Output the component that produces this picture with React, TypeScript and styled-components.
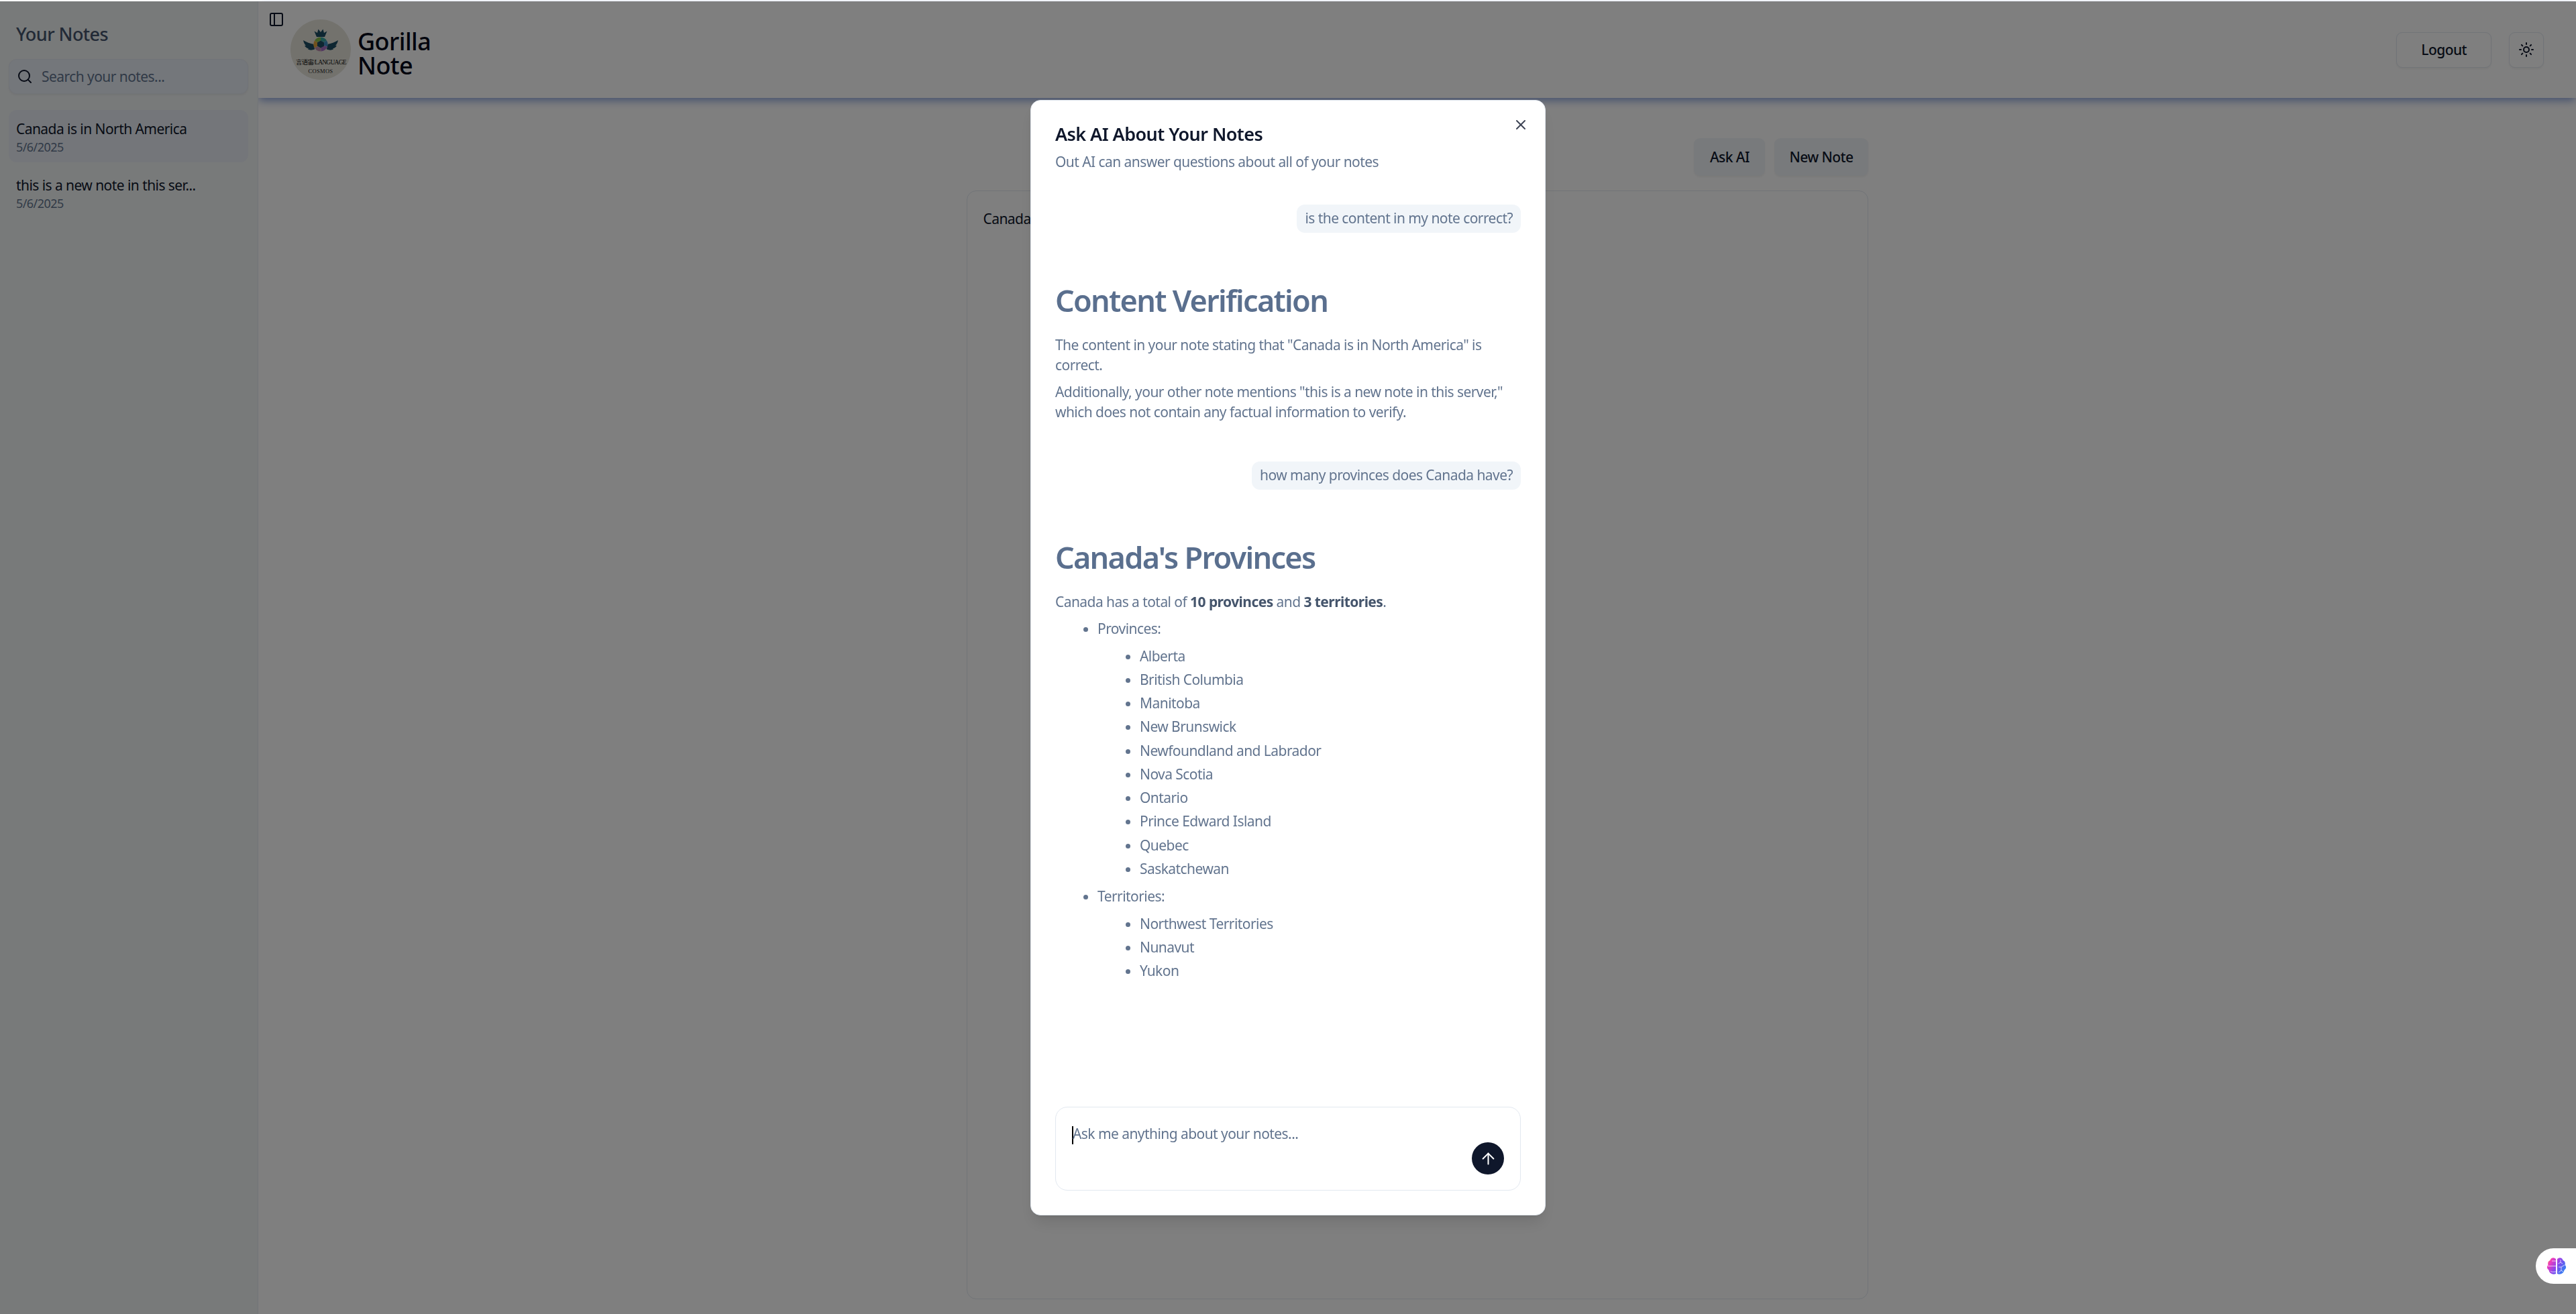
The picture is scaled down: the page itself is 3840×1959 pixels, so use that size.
import styled, { createGlobalStyle } from 'styled-components';
import { ArrowUp, PanelLeft, Search, Sun, X } from 'lucide-react';

const GlobalStyle = createGlobalStyle`
  html, body {
    margin: 0;
    padding: 0;
    height: 100%;
    background: #fff;
    font-family: 'Noto Sans', 'Open Sans', 'Liberation Sans', sans-serif;
    letter-spacing: -0.035em;
    color: #0f172b;
  }
  * { box-sizing: border-box; }
`;

const Page = styled.div`
  display: flex;
  height: 1959px;
  padding-top: 2px;
  overflow: hidden;
`;

const Sidebar = styled.aside`
  position: relative;
  z-index: 2;
  width: 385px;
  flex: none;
  padding: 30px 14px 0 13px;
  background: #f1f4f5;
  border-right: 1px solid #e2e8f0;
`;

const SidebarTitle = styled.h2`
  margin: 0 0 18px 11px;
  font-size: 27px;
  line-height: 38px;
  font-weight: 500;
  color: #45556c;
`;

const SearchBox = styled.div`
  display: flex;
  align-items: center;
  gap: 13px;
  height: 52px;
  padding: 0 11px;
  margin-bottom: 24px;
  border: 1.5px solid #e2e8f0;
  border-radius: 12px;
  background: #e8eef7;
  box-shadow: 0 1.5px 3px rgba(0, 0, 0, 0.05);
  font-size: 21px;
  color: #62748e;
`;

const NoteItem = styled.div<{ $active?: boolean }>`
  display: flex;
  flex-direction: column;
  justify-content: center;
  height: 78px;
  padding: 1px 11px 0;
  margin-bottom: 6px;
  border-radius: 12px;
  background: ${(p) => (p.$active ? '#e8edf4' : 'transparent')};
`;

const NoteTitle = styled.div`
  font-size: 21px;
  line-height: 30px;
  color: #0f172b;
`;

const NoteDate = styled.div`
  font-size: 18px;
  line-height: 24px;
  color: #62748e;
`;

const Main = styled.main`
  flex: 1;
  display: flex;
  flex-direction: column;
  min-width: 0;
`;

const Header = styled.header`
  position: relative;
  display: flex;
  align-items: center;
  justify-content: space-between;
  height: 144px;
  padding: 0 48px;
  background: #fff;
  box-shadow: 0 5px 12px -1px #8ca3dc;
`;

const ToggleButton = styled.span`
  position: absolute;
  left: 15px;
  top: 15px;
  display: flex;
  color: #0f172b;
`;

const Brand = styled.div`
  display: flex;
  align-items: center;
  gap: 10px;
`;

const BrandName = styled.div`
  padding-top: 11px;
  font-size: 36px;
  line-height: 36px;
  font-weight: 500;
  color: #020618;
`;

const HeaderActions = styled.div`
  display: flex;
  gap: 26px;
  align-items: center;
`;

const OutlineButton = styled.button`
  display: flex;
  align-items: center;
  justify-content: center;
  height: 53px;
  min-width: 52px;
  padding: 0 ${(p) => (typeof p.children === 'string' ? '36px' : '0')};
  border: 1.5px solid #e2e8f0;
  border-radius: 9px;
  background: #fff;
  box-shadow: 0 1.5px 3px rgba(0, 0, 0, 0.05);
  font: inherit;
  font-size: 21px;
  font-weight: 500;
  letter-spacing: inherit;
  color: #0f172b;
`;

const Content = styled.div`
  flex: 1;
  display: flex;
  flex-direction: column;
  width: 100%;
  max-width: 1344px;
  margin: 0 auto;
  padding: 60px 0 22px;
  min-height: 0;
`;

const Actions = styled.div`
  display: flex;
  justify-content: flex-end;
  gap: 14px;
  margin-bottom: 22px;
`;

const SecondaryButton = styled.button`
  height: 56px;
  min-width: 106px;
  padding: 0 22px;
  border: 0;
  border-radius: 9px;
  background: #f1f5f9;
  box-shadow: 0 1.5px 3px rgba(0, 0, 0, 0.05);
  font: inherit;
  font-size: 21px;
  font-weight: 500;
  letter-spacing: inherit;
  color: #0f172b;
`;

const Editor = styled.div`
  flex: 1;
  padding: 26px 24px;
  border: 1.5px solid #e2e8f0;
  border-radius: 14px;
  font-size: 21px;
  line-height: 30px;
  color: #0f172b;
`;

const Overlay = styled.div`
  position: fixed;
  z-index: 5;
  inset: 2px 0 0 0;
  display: flex;
  align-items: center;
  justify-content: center;
  background: rgba(0, 0, 0, 0.5);
`;

const Modal = styled.div`
  position: relative;
  display: flex;
  flex-direction: column;
  width: 768px;
  height: 1663px;
  padding: 36px;
  border: 1.5px solid #e2e8f0;
  border-radius: 15px;
  background: #fff;
  box-shadow: 0 15px 22px -4px rgba(0, 0, 0, 0.1), 0 6px 9px -6px rgba(0, 0, 0, 0.1);
`;

const CloseButton = styled.span`
  position: absolute;
  top: 24px;
  right: 24px;
  display: flex;
  color: #0f172b;
  opacity: 0.8;
`;

const ModalTitle = styled.h2`
  margin: 0;
  font-size: 27px;
  line-height: 27px;
  font-weight: 600;
  color: #0f172b;
`;

const ModalSubtitle = styled.p`
  margin: 13px 0 0;
  font-size: 21px;
  line-height: 30px;
  color: #62748e;
`;

const Thread = styled.div`
  flex: 1;
  display: flex;
  flex-direction: column;
  padding-top: 49px;
  min-height: 0;
`;

const Bubble = styled.div`
  align-self: flex-end;
  height: 42px;
  padding: 0 12px;
  border-radius: 12px;
  background: #f1f5f9;
  font-size: 21px;
  line-height: 40px;
  color: #62748e;
`;

const Answer = styled.div`
  padding: 69px 0 49px;
  color: #62748e;
  font-size: 21px;
  line-height: 30px;
`;

const AnswerHeading = styled.h1`
  margin: 5px 0 24px;
  font-size: 45px;
  line-height: 54px;
  font-weight: 600;
  letter-spacing: -0.038em;
  color: #5a6f8e;
`;

const Paragraph = styled.p`
  margin: 0 0 10px;
`;

const Bold = styled.strong`
  font-weight: 700;
  color: #45556c;
`;

const List = styled.ul`
  margin: 0;
  padding-left: 63px;
  list-style: disc;

  & & {
    margin: 10.5px 0 11.5px;
  }
`;

const Item = styled.li`
  margin-top: 5.25px;
  &::marker { color: #62748e; }
`;

const Composer = styled.div`
  position: relative;
  height: 125px;
  padding: 24px 24px;
  border: 1.5px solid #e2e8f0;
  border-radius: 18px;
  font-size: 21px;
  line-height: 30px;
  color: #62748e;
`;

const Caret = styled.span`
  display: inline-block;
  width: 2px;
  height: 27px;
  margin-right: -1px;
  vertical-align: middle;
  background: #000;
`;

const SendButton = styled.span`
  position: absolute;
  right: 24px;
  bottom: 23px;
  display: flex;
  align-items: center;
  justify-content: center;
  width: 48px;
  height: 48px;
  border-radius: 50%;
  background: #0f172b;
  color: #fff;
`;

const WidgetTab = styled.div`
  position: fixed;
  z-index: 6;
  right: 0;
  top: 1861px;
  display: flex;
  align-items: center;
  width: 60px;
  height: 53px;
  padding-left: 16px;
  border-radius: 27px 0 0 27px;
  background: #fff;
`;

const provinces = [
  'Alberta',
  'British Columbia',
  'Manitoba',
  'New Brunswick',
  'Newfoundland and Labrador',
  'Nova Scotia',
  'Ontario',
  'Prince Edward Island',
  'Quebec',
  'Saskatchewan',
];

const territories = ['Northwest Territories', 'Nunavut', 'Yukon'];

function Logo() {
  return (
    <svg width="90" height="90" viewBox="0 0 90 90">
      <circle cx="45" cy="45" r="45" fill="#e6e4da" />
      {/* crown */}
      <path d="M39 26 L35.5 17.5 L40 20 L41.5 14.5 L45 19 L48.5 14.5 L50 20 L54.5 17.5 L51 26 Z" fill="#1c4d63" />
      {/* wings */}
      <path d="M35 37 C29 36 24 34 19 31 C20 35 21 37 23 39 L21 39 C23 42 25 43 27 43.5 L26 44.5 C29 46 32 46 36 44.5 Z" fill="#1c4d63" />
      <path d="M55 37 C61 36 66 34 71 31 C70 35 69 37 67 39 L69 39 C67 42 65 43 63 43.5 L64 44.5 C61 46 58 46 54 44.5 Z" fill="#1c4d63" />
      {/* lens */}
      <circle cx="45" cy="37" r="10.5" fill="#fff" />
      <path d="M45 26.5 a10.5 10.5 0 0 1 9 5 l-4 2.5 -5 -2 z" fill="#3aa7a0" />
      <path d="M54 31.5 a10.5 10.5 0 0 1 1 9 l-5 -1.5 v-5 z" fill="#3f8fc4" />
      <path d="M55 40.5 a10.5 10.5 0 0 1 -9 7 l-1 -5 5 -3.5 z" fill="#a56fc2" />
      <path d="M46 47.5 a10.5 10.5 0 0 1 -10 -5 l4 -2.5 5 2.5 z" fill="#b98aa8" />
      <path d="M36 42.5 a10.5 10.5 0 0 1 0 -11 l4 2.5 v6 z" fill="#e2a23b" />
      <path d="M36 31.5 a10.5 10.5 0 0 1 9 -5 v5 l-5 2.5 z" fill="#8bbf4a" />
      <polygon points="45,31.5 50,34.2 50,39.8 45,42.5 40,39.8 40,34.2" fill="#1c4d63" />
      <text x="8" y="67" textLength="75" fontSize="9.5" fontFamily="'Liberation Serif','Noto Sans CJK SC',serif" fill="#111">
        言语宙/LANGUAGE
      </text>
      <text x="45" y="80" textAnchor="middle" fontSize="8.5" letterSpacing="0.3" fontFamily="'Liberation Serif',serif" fill="#222">
        COSMOS
      </text>
    </svg>
  );
}

function BrainIcon() {
  return (
    <svg width="30" height="28" viewBox="0 0 30 28">
      <defs>
        <linearGradient id="brainGrad" x1="0" y1="0" x2="1" y2="0.55">
          <stop offset="0" stopColor="#f7922c" />
          <stop offset="0.25" stopColor="#ec3bc0" />
          <stop offset="0.6" stopColor="#8a45ec" />
          <stop offset="1" stopColor="#3b7cf2" />
        </linearGradient>
      </defs>
      <path d="M14 3 C11 0 6 1 5.5 5 C2.5 6 1.5 9 2.5 12 C0 14 0.5 18 3.5 19.5 C4 24 9 27 14 25 Z M16 3 C19 0 24 1 24.5 5 C27.5 6 28.5 9 27.5 12 C30 14 29.5 18 26.5 19.5 C26 24 21 27 16 25 Z" fill="url(#brainGrad)" />
      <path d="M2 13.5 H14 M8 6 H14 M6 21 C8 23 11 22 14 22 M21 4 V8 L17.5 10 M21 8 L24 10 M27 12 L22 15 H18 M22 15 V20 M22 20 L18 23 M22 20 L25 22" stroke="#fff" strokeWidth="0.9" fill="none" opacity="0.8" />
    </svg>
  );
}

export default function App() {
  return (
    <>
      <GlobalStyle />
      <Page>
        <Sidebar>
          <SidebarTitle>Your Notes</SidebarTitle>
          <SearchBox>
            <Search size={24} color="#0f172b" strokeWidth={2} />
            Search your notes...
          </SearchBox>
          <NoteItem $active>
            <NoteTitle>Canada is in North America</NoteTitle>
            <NoteDate>5/6/2025</NoteDate>
          </NoteItem>
          <NoteItem>
            <NoteTitle>this is a new note in this ser...</NoteTitle>
            <NoteDate>5/6/2025</NoteDate>
          </NoteItem>
        </Sidebar>
        <Main>
          <Header>
            <ToggleButton>
              <PanelLeft size={24} />
            </ToggleButton>
            <Brand>
              <Logo />
              <BrandName>
                Gorilla
                <br />
                Note
              </BrandName>
            </Brand>
            <HeaderActions>
              <OutlineButton>Logout</OutlineButton>
              <OutlineButton>
                <Sun size={24} />
              </OutlineButton>
            </HeaderActions>
          </Header>
          <Content>
            <Actions>
              <SecondaryButton>Ask AI</SecondaryButton>
              <SecondaryButton>New Note</SecondaryButton>
            </Actions>
            <Editor>Canada is in North America</Editor>
          </Content>
        </Main>
      </Page>
      <Overlay>
        <Modal>
          <CloseButton>
            <X size={24} />
          </CloseButton>
          <ModalTitle>Ask AI About Your Notes</ModalTitle>
          <ModalSubtitle>Out AI can answer questions about all of your notes</ModalSubtitle>
          <Thread>
            <Bubble>is the content in my note correct?</Bubble>
            <Answer>
              <AnswerHeading>Content Verification</AnswerHeading>
              <Paragraph>The content in your note stating that "Canada is in North America" is correct.</Paragraph>
              <Paragraph>
                Additionally, your other note mentions "this is a new note in this server," which does not contain any
                factual information to verify.
              </Paragraph>
            </Answer>
            <Bubble>how many provinces does Canada have?</Bubble>
            <Answer>
              <AnswerHeading>Canada's Provinces</AnswerHeading>
              <Paragraph>
                Canada has a total of <Bold>10 provinces</Bold> and <Bold>3 territories</Bold>.
              </Paragraph>
              <List>
                <Item>
                  Provinces:
                  <List>
                    {provinces.map((name) => (
                      <Item key={name}>{name}</Item>
                    ))}
                  </List>
                </Item>
                <Item>
                  Territories:
                  <List>
                    {territories.map((name) => (
                      <Item key={name}>{name}</Item>
                    ))}
                  </List>
                </Item>
              </List>
            </Answer>
          </Thread>
          <Composer>
            <Caret />
            Ask me anything about your notes...
            <SendButton>
              <ArrowUp size={27} strokeWidth={1.8} />
            </SendButton>
          </Composer>
        </Modal>
      </Overlay>
      <WidgetTab>
        <BrainIcon />
      </WidgetTab>
    </>
  );
}
